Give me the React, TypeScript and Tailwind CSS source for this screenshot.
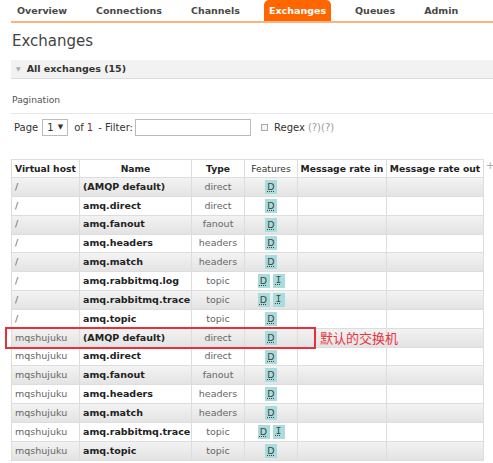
import React from "react";

const rows: [string, string, string, string[]][] = [
  ["/", "(AMQP default)", "direct", ["D"]],
  ["/", "amq.direct", "direct", ["D"]],
  ["/", "amq.fanout", "fanout", ["D"]],
  ["/", "amq.headers", "headers", ["D"]],
  ["/", "amq.match", "headers", ["D"]],
  ["/", "amq.rabbitmq.log", "topic", ["D", "I"]],
  ["/", "amq.rabbitmq.trace", "topic", ["D", "I"]],
  ["/", "amq.topic", "topic", ["D"]],
  ["mqshujuku", "(AMQP default)", "direct", ["D"]],
  ["mqshujuku", "amq.direct", "direct", ["D"]],
  ["mqshujuku", "amq.fanout", "fanout", ["D"]],
  ["mqshujuku", "amq.headers", "headers", ["D"]],
  ["mqshujuku", "amq.match", "headers", ["D"]],
  ["mqshujuku", "amq.rabbitmq.trace", "topic", ["D", "I"]],
  ["mqshujuku", "amq.topic", "topic", ["D"]],
];

const tabs = ["Overview", "Connections", "Channels", "Exchanges", "Queues", "Admin"];

export default function App() {
  return (
    <div className="relative w-[493px] h-[463px] overflow-hidden bg-white font-['DejaVu_Sans',Verdana,sans-serif] text-[#444]">
      {/* nav */}
      <div className="flex items-end gap-[19px] pl-[1px] h-[23px] ml-[11px] border-b-2 border-[#fbb27c]">
        {tabs.map((t) => (
          <div
            key={t}
            className={
              t === "Exchanges"
                ? "px-[5px] h-[21px] pt-[2px] flex items-center bg-[#ff6600] text-white rounded-t-[5px] text-[9.5px] font-bold"
                : "px-[5px] h-[21px] pt-[2px] flex items-center text-[#484848] text-[9.5px] font-bold"
            }
          >
            {t}
          </div>
        ))}
      </div>

      {/* heading */}
      <div className="ml-[12px] mt-[8px] text-[15px] leading-[20px] text-[#444]">Exchanges</div>

      {/* section bar */}
      <div className="ml-[11px] mt-[9px] h-[19px] bg-[#f2f2f2] border-b border-[#ddd] flex items-center">
        <span className="ml-[5px] text-[6px] text-[#aaa] leading-none">▼</span>
        <span className="ml-[6px] text-[9.5px] font-bold text-[#333]">All exchanges (15)</span>
      </div>

      {/* pagination label */}
      <div className="ml-[11px] mt-[7px] pb-[3px] border-b border-[#e6e6e6]">
        <span className="ml-[1px] text-[9.2px] text-[#555]">Pagination</span>
      </div>

      {/* page row */}
      <div className="ml-[14px] mt-[4px] flex items-center h-[18px] text-[10px] text-[#333]">
        <span>Page</span>
        <div className="ml-[4px] w-[26px] h-[17px] border border-[#bbb] bg-white flex items-center justify-between px-[4px] text-[10px]">
          <span>1</span>
          <span className="text-[7px]">▼</span>
        </div>
        <span className="ml-[6px]">of</span>
        <span className="ml-[3px] text-[#7b2855]">1</span>
        <span className="ml-[5px]">- Filter:</span>
        <div className="ml-[2px] w-[116px] h-[17px] border border-[#bbb] bg-white" />
        <div className="ml-[10px] w-[7px] h-[7px] border border-[#aaa] bg-[#f4f4f4]" />
        <span className="ml-[6px]">Regex</span>
        <span className="ml-[3px] text-[#999]">(?)(?)</span>
      </div>

      {/* table */}
      <div className="ml-[11px] mt-[23px] flex items-start">
        <table className="border-collapse text-[9.5px] table-fixed w-[472px]">
          <colgroup>
            <col className="w-[68px]" />
            <col className="w-[112px]" />
            <col className="w-[53px]" />
            <col className="w-[53px]" />
            <col className="w-[89px]" />
            <col className="w-[97px]" />
          </colgroup>
          <thead>
            <tr className="h-[18px] bg-white text-[9.2px]">
              <th className="border border-[#ddd] font-bold text-[#222] text-left pl-[3px] whitespace-nowrap p-0">Virtual host</th>
              <th className="border border-[#ddd] font-bold text-[#222] text-center p-0">Name</th>
              <th className="border border-[#ddd] font-bold text-[#222] text-center p-0">Type</th>
              <th className="border border-[#ddd] font-normal text-[#333] text-center p-0">Features</th>
              <th className="border border-[#ddd] font-bold text-[#222] text-center p-0 whitespace-nowrap">Message rate in</th>
              <th className="border border-[#ddd] font-bold text-[#222] text-center p-0 whitespace-nowrap">Message rate out</th>
            </tr>
          </thead>
          <tbody>
            {rows.map(([vh, name, type, feats], i) => (
              <tr
                key={i}
                className={
                  i % 2 === 0
                    ? "h-[18.85px] bg-gradient-to-b from-[#f3f3f3] to-[#e3e3e3]"
                    : "h-[18.85px] bg-white"
                }
              >
                <td className="border border-[#ddd] text-[#666] pl-[3px] p-0 whitespace-nowrap">{vh}</td>
                <td className="border border-[#ddd] text-[#222] font-bold pl-[3px] p-0 whitespace-nowrap">{name}</td>
                <td className="border border-[#ddd] text-[#666] text-center p-0">{type}</td>
                <td className="border border-[#ddd] p-0">
                  <div className="flex justify-center gap-[3px]">
                    {feats.map((f) => (
                      <span
                        key={f}
                        className={
                          f === "I"
                            ? "w-[12px] h-[14px] bg-[#a9dcdc] text-[#444] text-[10px] leading-[14px] text-center underline decoration-dotted font-['Liberation_Mono',monospace]"
                            : "w-[12px] h-[14px] bg-[#a9dcdc] text-[#444] text-[9.5px] leading-[14px] text-center underline decoration-dotted"
                        }
                      >
                        {f}
                      </span>
                    ))}
                  </div>
                </td>
                <td className="border border-[#ddd] p-0" />
                <td className="border border-[#ddd] p-0" />
              </tr>
            ))}
          </tbody>
        </table>
        <span className="ml-[2px] mt-[2px] text-[10px] text-[#aaa] leading-none">+</span>
      </div>

      {/* annotation */}
      <div className="absolute left-[5px] top-[327px] w-[311px] h-[22px] border-2 border-[#e5323a]" />
      <div className="absolute left-[320px] top-[330px] text-[13px] leading-[16px] text-[#e8343c] font-['Noto_Sans_CJK_SC',sans-serif]">
        默认的交换机
      </div>
    </div>
  );
}
